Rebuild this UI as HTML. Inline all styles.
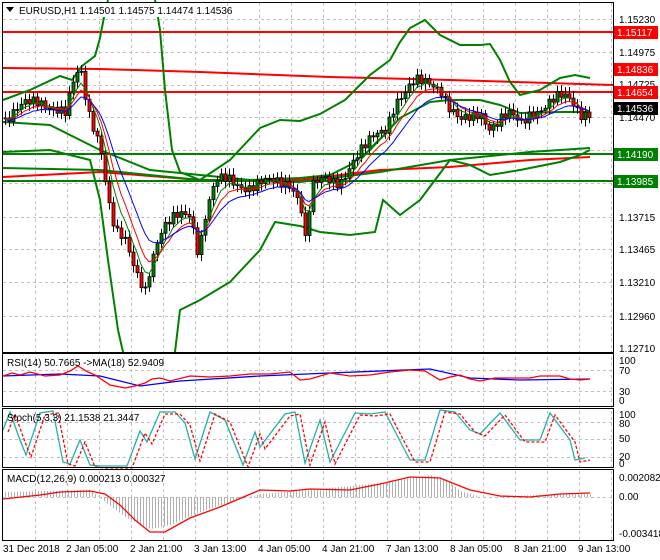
<!DOCTYPE html>
<html><head><meta charset="utf-8"><style>
html,body{margin:0;padding:0;background:#fff;width:660px;height:560px;overflow:hidden}
svg{display:block;font-family:"Liberation Sans",Arial,sans-serif;font-size:10px}
</style></head><body>
<svg id="s" width="660" height="560" xmlns="http://www.w3.org/2000/svg">
<rect width="660" height="560" fill="#fff"/>
<g id="grid" stroke="#c0c0c0" stroke-dasharray="3,3" stroke-width="1"></g>
<g id="main"></g>
<g fill="none" stroke="#000" stroke-width="1">
<rect x="2.5" y="2.5" width="611" height="350"/>
<rect x="2.5" y="353.5" width="611" height="53"/>
<rect x="2.5" y="408.5" width="611" height="59"/>
<rect x="2.5" y="469.5" width="611" height="71"/>
</g>
<g fill="#000" font-size="10">
<text x="619" y="23">1.15230</text>
<text x="619" y="56">1.14975</text>
<text x="619" y="88">1.14725</text>
<text x="619" y="121">1.14470</text>
<text x="619" y="221">1.13715</text>
<text x="619" y="253">1.13465</text>
<text x="619" y="286">1.13210</text>
<text x="619" y="320">1.12960</text>
<text x="619" y="352">1.12710</text>
<text x="619" y="364">100</text><text x="619" y="374">70</text><text x="619" y="395">30</text><text x="619" y="404">0</text>
<text x="619" y="418">100</text><text x="619" y="427">80</text><text x="619" y="442">50</text><text x="619" y="460">20</text><text x="619" y="467">0</text>
<text x="619" y="481">0.002082</text><text x="619" y="500">0.00</text><text x="619" y="537">-0.003418</text>
</g>
<g font-size="10">
<rect x="614" y="26" width="44" height="13" fill="#ff0000"/><text x="617" y="36" fill="#fff">1.15117</text>
<rect x="614" y="63" width="44" height="13" fill="#ff0000"/><text x="617" y="73" fill="#fff">1.14836</text>
<rect x="614" y="86" width="44" height="13" fill="#ff0000"/><text x="617" y="96" fill="#fff">1.14654</text>
<rect x="614" y="102" width="44" height="13" fill="#000"/><text x="617" y="112" fill="#fff">1.14536</text>
<rect x="614" y="148" width="44" height="13" fill="#008000"/><text x="617" y="158" fill="#fff">1.14190</text>
<rect x="614" y="175" width="44" height="13" fill="#008000"/><text x="617" y="185" fill="#fff">1.13985</text>
</g>
<g fill="#000" font-size="10">
<text x="3" y="552">31 Dec 2018</text><text x="66" y="552">2 Jan 05:00</text><text x="130" y="552">2 Jan 21:00</text>
<text x="194" y="552">3 Jan 13:00</text><text x="258" y="552">4 Jan 05:00</text><text x="322" y="552">4 Jan 21:00</text>
<text x="386" y="552">7 Jan 13:00</text><text x="450" y="552">8 Jan 05:00</text><text x="514" y="552">8 Jan 21:00</text>
<text x="578" y="552">9 Jan 13:00</text>
</g>
<g fill="#000" font-size="10">
<rect x="3" y="3" width="212" height="14" fill="#fff"/>
<path d="M6 7 L14 7 L10 12 Z"/>
<text x="19" y="14">EURUSD,H1  1.14501 1.14575 1.14474 1.14536</text>
<text x="7" y="366">RSI(14) 50.7665  -&gt;MA(18) 52.9409</text>
<text x="7" y="421">Stoch(5,3,3) 21.1538 21.3447</text>
<text x="7" y="482">MACD(12,26,9) 0.000213 0.000327</text>
</g>
</svg>
<script>
const NS="http://www.w3.org/2000/svg";
const g=document.getElementById('grid'),m=document.getElementById('main');
function el(p,t,a){const e=document.createElementNS(NS,t);for(const k in a)e.setAttribute(k,a[k]);p.appendChild(e);return e;}
for(let x=35;x<614;x+=32) el(g,'line',{x1:x+.5,y1:3,x2:x+.5,y2:540});
[19,52,85,117,150,183,217,249,282,316].forEach(y=>el(g,'line',{x1:3,y1:y+.5,x2:613,y2:y+.5}));
[370,391].forEach(y=>el(g,'line',{x1:3,y1:y+.5,x2:613,y2:y+.5}));
[422,439,457].forEach(y=>el(g,'line',{x1:3,y1:y+.5,x2:613,y2:y+.5}));
[497].forEach(y=>el(g,'line',{x1:3,y1:y+.5,x2:613,y2:y+.5}));
function interp(pts,x){for(let i=0;i<pts.length-1;i++){const[a,b]=pts[i],[c,d]=pts[i+1];if(x>=a&&x<=c)return b+(d-b)*(x-a)/(c-a);}return pts[pts.length-1][1];}
function pl(pts,stroke,w,dash){el(m,'polyline',{points:pts.map(p=>p.join(',')).join(' '),fill:'none',stroke:stroke,'stroke-width':w||2,'stroke-dasharray':dash||''});}
pl([[3,32],[613,32]],'#f00',2);
pl([[3,92],[613,92]],'#f00',2);
pl([[3,68],[100,69],[200,72],[330,77],[450,80],[613,85]],'#f00',2);
pl([[3,154],[613,154]],'#008000',2);
pl([[3,181],[613,181]],'#008000',2);
pl([[3,177],[100,172],[200,180],[300,180],[380,170],[450,167],[530,160],[590,157]],'#f00',2);
pl([[3,100],[30,90],[60,76],[72,80],[82,66],[95,56],[100,38],[105,12],[108,0]],'#008000',2);
pl([[155,0],[160,30],[165,90],[172,150],[180,172],[200,180],[230,160],[260,128],[280,120],[300,121],[320,114],[345,100],[370,75],[390,60],[400,42],[410,28],[425,20],[440,35],[460,45],[480,45],[490,44],[500,60],[510,82],[520,95],[540,90],[560,78],[575,75],[590,78]],'#008000',2);
pl([[3,152],[50,150],[90,160],[100,200],[108,260],[118,330],[123,352]],'#008000',2);
pl([[175,352],[180,310],[200,300],[230,282],[260,250],[275,222],[300,226],[320,232],[350,235],[375,232],[383,200],[400,215],[420,200],[450,160],[470,165],[490,175],[520,170],[560,162],[580,155],[590,150]],'#008000',2);
pl([[3,122],[50,125],[100,150],[150,170],[200,175],[250,180],[300,178],[330,175],[350,165],[370,150],[400,118],[430,102],[450,100],[480,100],[500,105],[520,113],[560,112],[590,112]],'#008000',2);
pl([[3,168],[100,170],[200,180],[300,182],[380,172],[450,160],[530,152],[590,148]],'#008000',2);
const P=[[3,118],[20,110],[40,100],[55,105],[65,115],[75,80],[80,72],[88,110],[100,140],[108,200],[115,235],[125,245],[135,270],[145,285],[152,255],[160,235],[170,225],[180,215],[190,210],[198,250],[205,215],[215,185],[230,180],[250,185],[270,185],[290,180],[300,200],[305,240],[312,190],[325,180],[340,178],[350,165],[365,150],[375,135],[385,125],[395,100],[405,95],[415,85],[430,80],[440,85],[450,110],[460,125],[470,120],[480,110],[490,125],[500,120],[510,118],[520,125],[530,110],[545,105],[560,100],[570,100],[580,110],[590,110]];
const cl=[];let prev=interp(P,3);
for(let x=5;x<=590;x+=4){const c=interp(P,x)+6*Math.sin(x*1.7)+4*Math.sin(x*0.9);cl.push([x,c]);
 const o=prev,hi=Math.min(o,c)-3-4*Math.abs(Math.sin(x*2.3)),lo=Math.max(o,c)+3+4*Math.abs(Math.cos(x*1.3));
 el(m,'line',{x1:x+.5,y1:hi,x2:x+.5,y2:lo,stroke:'#000','stroke-width':1});
 el(m,'rect',{x:x-1,y:Math.min(o,c),width:3,height:Math.max(1,Math.abs(o-c)),fill:c<o?'#008000':'#ff0000',stroke:'#000','stroke-width':.8});
 prev=c;}
function ema(a,n,off){let v=a[0][1];const k=2/(n+1);return a.map(p=>{v=v+k*(p[1]-v);return[p[0],v+off];});}
pl(ema(cl,5,0),'#008000',1);pl(ema(cl,8,1),'#f00',1);pl(ema(cl,13,2),'#00f',1);
const rsiMA=[[3,376],[60,374],[100,376],[140,386],[180,381],[260,376],[330,373],[430,369],[470,378],[520,380],[590,379]];
const rsi=[[3,376],[12,373],[20,375],[30,372],[45,376],[60,375],[70,371],[78,366],[88,372],[95,375],[110,385],[125,388],[135,386],[145,383],[152,379],[160,378],[170,381],[190,376],[210,377],[230,376],[250,374],[270,374],[290,372],[300,380],[310,379],[330,373],[350,376],[370,375],[390,372],[410,370],[425,371],[440,380],[450,377],[460,375],[470,379],[480,381],[495,378],[510,378],[530,378],[540,376],[560,376],[570,379],[580,380],[590,379]];
pl(rsiMA,'#00f',1.3);pl(rsi,'#f00',1.3);
const st=[[3,430],[10,412],[20,440],[26,455],[40,413],[53,411],[63,462],[70,464],[80,440],[90,465],[100,466],[127,466],[140,431],[147,442],[160,412],[175,412],[185,423],[195,459],[210,412],[225,420],[243,465],[255,432],[260,447],[285,414],[295,412],[305,463],[320,420],[330,462],[355,413],[370,414],[385,412],[400,441],[410,460],[425,460],[440,410],[455,412],[470,430],[480,434],[500,413],[520,440],[540,440],[550,413],[570,440],[575,460],[585,458]];
pl(st,'#20b2aa',1.3);pl(st.map(p=>[p[0]+5,p[1]+2]),'#f00',1.3,'3,2');
for(let x=5;x<=590;x+=3){const z=497;let v=interp([[3,5],[90,7],[105,-5],[125,-20],[150,-32],[170,-28],[200,-15],[230,-5],[260,3],[300,6],[380,14],[430,22],[445,18],[460,6],[480,0],[540,2],[590,3]],x);
 el(m,'line',{x1:x+.5,y1:z,x2:x+.5,y2:z-v,stroke:'#b0b0b0','stroke-width':1});}
pl([[3,499],[40,495],[60,492],[90,491],[105,494],[120,505],[135,520],[150,532],[165,532],[190,518],[220,507],[260,490],[290,491],[310,489],[350,490],[380,484],[410,477],[440,478],[470,490],[500,496],[530,497],[560,494],[590,493]],'#f00',1.3);
</script>
</body></html>
